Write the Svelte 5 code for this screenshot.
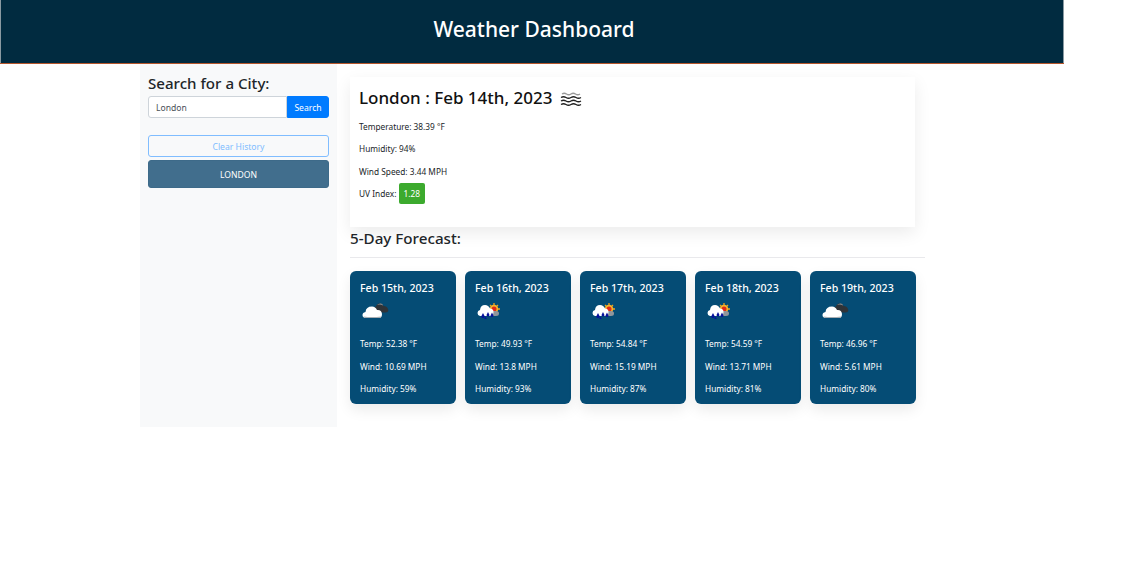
<script>
  const forecast = [
    { date: 'Feb 15th, 2023', icon: 'cloud', temp: '52.38', wind: '10.69', humidity: '59' },
    { date: 'Feb 16th, 2023', icon: 'rain', temp: '49.93', wind: '13.8', humidity: '93' },
    { date: 'Feb 17th, 2023', icon: 'rain', temp: '54.84', wind: '15.19', humidity: '87' },
    { date: 'Feb 18th, 2023', icon: 'rain', temp: '54.59', wind: '13.71', humidity: '81' },
    { date: 'Feb 19th, 2023', icon: 'cloud', temp: '46.96', wind: '5.61', humidity: '80' }
  ];
</script>

<div class="page">
  <header>Weather Dashboard</header>

  <div class="row">
    <aside>
      <h2>Search for a City:</h2>
      <form class="search" onsubmit={(e) => e.preventDefault()}>
        <input type="text" value="London" />
        <button class="go">Search</button>
      </form>
      <button class="clear">Clear History</button>
      <button class="city">LONDON</button>
    </aside>

    <main>
      <section class="today">
        <h1>
          London : Feb 14th, 2023
          <svg class="mist" width="22" height="15" viewBox="0 0 22 15" fill="none" stroke="#222" stroke-width="1.3">
            <path stroke="#999" d="M2 2q2.250-1.500 4.500 0t4.500 0 4.500 0 4.500 0" />
            <path d="M1 5.500q2.500-1.500 5 0t5 0 5 0 5 0" />
            <path d="M1 9q2.500-1.500 5 0t5 0 5 0 5 0" />
            <path d="M1 12.500q2.500-1.500 5 0t5 0 5 0 5 0" />
          </svg>
        </h1>
        <p>Temperature: 38.39 °F</p>
        <p>Humidity: 94%</p>
        <p>Wind Speed: 3.44 MPH</p>
        <p class="uv">UV Index: <span>1.28</span></p>
      </section>

      <h3>5-Day Forecast:</h3>
      <hr />

      <div class="cards">
        {#each forecast as day}
          <article>
            <h4>{day.date}</h4>
            {#if day.icon === 'cloud'}
              <svg class="icon" width="28" height="18" viewBox="0 0 28 18">
                <path fill="#2f3338" d="M12 9q-1-4 2-4.500 1-3.500 4-3 2.500-.5 3.500 2.500 3.500 0 4.500 3t-2 3.500H14z" />
                <path fill="#8a8f94" d="M15 3q2-2 4-1.500 2 .5 2 2-3-1.500-6-.5z" />
                <path fill="#fff" d="M3.500 16q-3-.5-3-3t3-3q.5-5.500 6.500-5.500 3.500 0 5 3.500 4.500-.5 5 4 0 4-3 4z" />
                <path fill="#a9aeb3" d="M1.500 14.500q8 1 18 0-.5 1.500-2 1.500H3.500q-1.500 0-2-1.500z" />
              </svg>
            {:else}
              <svg class="icon" width="28" height="18" viewBox="0 0 28 18">
                <path stroke="#f2a21c" stroke-width="1.300" d="M17 1v12M11 7h12M13 3l8 8M21 3l-8 8" />
                <circle cx="17" cy="7" r="4.200" fill="#f6b52a" />
                <circle cx="17" cy="7" r="2.500" fill="#e32a18" />
                <path fill="#8f959c" d="M12 9h7q3 0 3 2.500T19 14h-7z" />
                <path fill="#fff" d="M3 14q-2.500-.5-2.500-3T3 8q.5-5 5-5 3.500 0 5 3.500 3.500 0 3.500 3.500t-3 4z" />
                <path fill="#06109a" d="M6 11l1.800 3.500q-.2 1.500-1.800 1.500t-1.800-1.500zM11 10l1.500 3q-.2 1.500-1.500 1.500T9.500 13zM15 10.500l1.500 3q-.2 1.500-1.500 1.500t-1.500-1.500zM8.500 14.500l1.300 2.500H7.200z" />
              </svg>
            {/if}
            <p>Temp: {day.temp} °F</p>
            <p>Wind: {day.wind} MPH</p>
            <p>Humidity: {day.humidity}%</p>
          </article>
        {/each}
      </div>
    </main>
  </div>
</div>

<style>
  :global(body) {
    font-family: "Noto Sans", "Open Sans", sans-serif;
    color: #212529;
    background: #fff;
  }

  .page {
    width: 1064px;
  }

  header {
    height: 63px;
    box-sizing: border-box;
    background: #012b40;
    border-left: 1px solid #8a9aa2;
    border-right: 1px solid #8a9aa2;
    padding-left: 4px;
    color: #fff;
    font-size: 21px;
    font-weight: 500;
    line-height: 58px;
    text-align: center;
    box-shadow: 0 1px 0 #b5562c;
  }

  .row {
    display: flex;
    margin: 1px 0 0 140px;
  }

  aside {
    width: 197px;
    height: 363px;
    box-sizing: border-box;
    background: #f8f9fa;
    padding: 8px 8px 0 8px;
    display: flex;
    flex-direction: column;
  }

  h2 {
    margin: 0 0 2px;
    font-size: 15.100px;
    font-weight: 500;
    line-height: 22px;
  }

  .search {
    display: flex;
    height: 22px;
    margin-bottom: 17px;
  }

  input {
    flex: 1;
    min-width: 0;
    box-sizing: border-box;
    border: 1px solid #ced4da;
    border-radius: 3px 0 0 3px;
    padding: 1px 7px 0;
    font: 8.600px "Noto Sans", sans-serif;
    color: #495057;
    background: #fff;
  }

  button {
    font-family: inherit;
    font-size: 8.600px;
    box-sizing: border-box;
    border-radius: 3px;
    padding: 1px 0 0;
  }

  .go {
    width: 42px;
    background: #007bff;
    border: 1px solid #007bff;
    border-radius: 0 3px 3px 0;
    color: #fff;
  }

  .clear {
    height: 22px;
    background: transparent;
    border: 1px solid #80bdff;
    color: #80bdff;
    margin-bottom: 3px;
  }

  .city {
    height: 28px;
    background: #416e8d;
    border: 1px solid #3d6a89;
    color: #fff;
  }

  main {
    width: 588px;
    padding: 13px 0 0 13px;
    box-sizing: border-box;
  }

  .today {
    width: 565px;
    height: 150px;
    box-sizing: border-box;
    padding: 10px 9px;
    background: #fff;
    box-shadow: 0 6px 16px rgba(0, 0, 0, 0.08);
  }

  h1 {
    margin: 0 0 10.500px;
    font-size: 17px;
    font-weight: 500;
    line-height: 22px;
    color: #111;
    display: flex;
    align-items: center;
    gap: 8px;
  }

  .mist {
    margin-top: 2px;
  }

  p {
    margin: 0 0 9px;
    font-size: 8.300px;
    line-height: 13.500px;
  }

  .uv {
    margin-top: -4px;
  }

  .uv span {
    display: inline-block;
    background: #3caa2e;
    color: #fff;
    border-radius: 2px;
    padding: 0 5px;
    line-height: 21px;
  }

  h3 {
    margin: 1px 0 0;
    font-size: 15.200px;
    font-weight: 500;
    line-height: 20px;
  }

  hr {
    width: 575px;
    margin: 9px 0 13px;
    border: 0;
    border-top: 1px solid #e9e9ec;
  }

  .cards {
    display: flex;
    gap: 9.500px;
  }

  article {
    width: 105.500px;
    height: 133px;
    box-sizing: border-box;
    padding: 9px 10px;
    background: #054c75;
    border-radius: 6px;
    color: #fff;
    box-shadow: 0 6px 14px rgba(0, 0, 0, 0.08);
  }

  h4 {
    margin: 0 0 6px;
    font-size: 10.600px;
    font-weight: 500;
    line-height: 16px;
  }

  .icon {
    display: block;
    margin: 0 0 17px 2px;
  }
</style>
